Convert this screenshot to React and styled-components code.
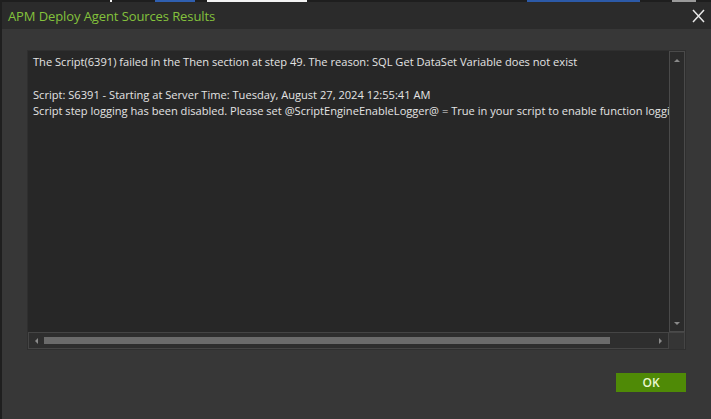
import styled, { createGlobalStyle } from "styled-components";

const GlobalStyle = createGlobalStyle`
  html, body { margin: 0; padding: 0; background: #373737; }
  * { box-sizing: border-box; }
`;

const Window = styled.div`
  width: 711px;
  height: 419px;
  background: #373737;
  border-left: 2px solid #1f1f1f;
  display: flex;
  flex-direction: column;
  font-family: "Open Sans", "Noto Sans", sans-serif;
  overflow: hidden;
`;

const BackStrip = styled.div`
  height: 2px;
  background: #1e1e1e;
  display: flex;
`;

const StripBit = styled.div`
  width: ${(p) => p.$w}px;
  margin-left: ${(p) => p.$ml}px;
  background: ${(p) => p.$c};
`;

const TitleBar = styled.div`
  height: 27px;
  background: #2b2b2b;
  display: flex;
  align-items: center;
  justify-content: space-between;
  padding: 0 6px 0 6px;
`;

const Title = styled.div`
  color: #84c23c;
  font-size: 13px;
  letter-spacing: -0.1px;
`;

const CloseButton = styled.button`
  background: none;
  border: 0;
  padding: 0;
  width: 14px;
  height: 16px;
  display: flex;
  align-items: center;
  justify-content: center;
  cursor: pointer;
`;

const Body = styled.div`
  flex: 1;
  display: flex;
  flex-direction: column;
  padding: 21px 24px 0 25px;
`;

const LogBox = styled.div`
  width: 659px;
  height: 300px;
  display: grid;
  grid-template-columns: 1fr 16px;
  grid-template-rows: 1fr 17px;
  border: 1px solid #2f2f2f;
`;

const LogText = styled.div`
  background: #272727;
  color: #e4e4e4;
  font-size: 11.1px;
  line-height: 16.3px;
  padding: 3px 0 0 5px;
  white-space: pre;
  overflow: hidden;
`;

const VScroll = styled.div`
  background: #2b2b2b;
  border: 1px solid #4a4a4a;
  display: flex;
  flex-direction: column;
  justify-content: space-between;
  align-items: center;
  padding: 7px 0 6px;
`;

const HScroll = styled.div`
  background: #2e2e2e;
  border: 1px solid #454545;
  display: flex;
  align-items: center;
  padding: 0 6px 0 6px;
  gap: 6px;
`;

const Track = styled.div`
  flex: 1;
  height: 7px;
  display: flex;
`;

const Thumb = styled.div`
  width: 566px;
  background: #6b6b6b;
`;

const Corner = styled.div`
  background: #353535;
  border-top: 1px solid #454545;
  border-right: 1px solid #454545;
`;

const Arrow = styled.div`
  width: 0;
  height: 0;
  border: 3px solid transparent;
  ${(p) => p.$dir === "up" && "border-bottom-color: #8a8a8a; border-top-width: 0;"}
  ${(p) => p.$dir === "down" && "border-top-color: #8a8a8a; border-bottom-width: 0;"}
  ${(p) => p.$dir === "left" && "border-right-color: #8a8a8a; border-left-width: 0;"}
  ${(p) => p.$dir === "right" && "border-left-color: #8a8a8a; border-right-width: 0;"}
`;

const Footer = styled.div`
  display: flex;
  justify-content: flex-end;
  padding: 23px 1px 0 0;
`;

const OkButton = styled.button`
  width: 70px;
  height: 19px;
  background: #4f8a06;
  border: 0;
  color: #eaf7cf;
  font-family: "Open Sans", "Noto Sans", sans-serif;
  font-size: 12px;
  font-weight: 600;
  padding: 0;
  cursor: pointer;
`;

const logLines = [
  "The Script(6391) failed in the Then section at step 49. The reason: SQL Get DataSet Variable does not exist",
  "",
  "Script: S6391 - Starting at Server Time: Tuesday, August 27, 2024 12:55:41 AM",
  "Script step logging has been disabled. Please set @ScriptEngineEnableLogger@ = True in your script to enable function logging.",
];

export default function App() {
  return (
    <>
      <GlobalStyle />
      <Window>
        <BackStrip>
          <StripBit $ml={108} $w={2} $c="#f2f2f2" />
          <StripBit $ml={43} $w={40} $c="#2f5fb0" />
          <StripBit $ml={12} $w={100} $c="#f4f4f4" />
          <StripBit $ml={220} $w={113} $c="#2c5aa8" />
          <StripBit $ml={32} $w={24} $c="#9a9a9a" />
        </BackStrip>
        <TitleBar>
          <Title>APM Deploy Agent Sources Results</Title>
          <CloseButton aria-label="Close">
            <svg width="13" height="14" viewBox="0 0 13 14">
              <path d="M1 1 L12 13 M12 1 L1 13" stroke="#e8e8e8" strokeWidth="1.5" />
            </svg>
          </CloseButton>
        </TitleBar>
        <Body>
          <LogBox>
            <LogText>{logLines.join("\n")}</LogText>
            <VScroll>
              <Arrow $dir="up" />
              <Arrow $dir="down" />
            </VScroll>
            <HScroll>
              <Arrow $dir="left" />
              <Track>
                <Thumb />
              </Track>
              <Arrow $dir="right" />
            </HScroll>
            <Corner />
          </LogBox>
          <Footer>
            <OkButton>OK</OkButton>
          </Footer>
        </Body>
      </Window>
    </>
  );
}
